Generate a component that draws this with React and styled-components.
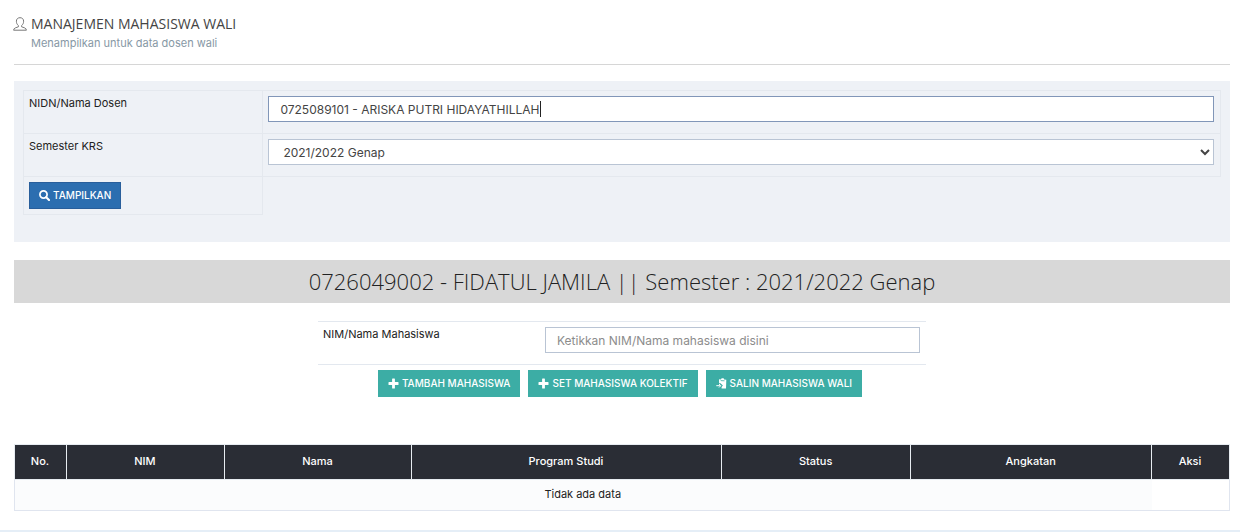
import React, { useState } from "react";
import styled, { createGlobalStyle } from "styled-components";

const GlobalStyle = createGlobalStyle`
  * { box-sizing: border-box; }
  body {
    margin: 0;
    background: #fff;
    color: #222;
    font-family: Inter, "Open Sans", sans-serif;
    font-size: 11px;
    line-height: 16px;
  }
  button, input, select { font-family: inherit; }
`;

const Page = styled.main`
  padding: 14px 10px 0 14px;
`;

const PageHeader = styled.header`
  display: flex;
  gap: 4px;
  padding-bottom: 12px;
  border-bottom: 1px solid #d6d6d6;

  svg { flex: none; margin: 3px 0 0 -1px; }
`;

const Title = styled.h1`
  margin: 0;
  color: #444;
  font-family: "Open Sans", sans-serif;
  font-size: 14px;
  font-weight: 400;
  line-height: 20px;
`;

const Subtitle = styled.p`
  margin: 0;
  color: #8798a5;
  font-size: 11px;
  line-height: 18px;
`;

const FilterPanel = styled.form`
  margin-top: 16px;
  padding: 9px 9px 27px;
  background: #eef1f6;
`;

const FilterTable = styled.table`
  width: 100%;
  table-layout: fixed;
  border-collapse: collapse;
`;

const FilterCell = styled.td`
  width: ${(p) => p.$width};
  height: ${(p) => (p.$last ? 38 : 43)}px;
  padding: 4px 6px 4px 5px;
  border: 1px solid #e4e8ee;
  vertical-align: top;

  input, select, button { margin-top: 1px; }
`;

const Field = styled.div`
  position: relative;
  display: flex;
`;

const TextBox = styled.input`
  display: block;
  width: 100%;
  height: 26px;
  padding: 0 11px;
  border: 1px solid ${(p) => (p.$active ? "#8196b8" : "#b9c4d4")};
  border-radius: 0;
  outline: 0;
  background: #fff;
  color: #444;
  font-size: 12px;

  &::placeholder { color: #8c8c8c; opacity: 1; }
`;

const Caret = styled.span`
  position: absolute;
  top: 6px;
  left: 12px;
  height: 16px;
  padding-right: 1px;
  border-right: 1px solid #222;
  color: transparent;
  font-size: 12px;
  white-space: pre;
  pointer-events: none;
  user-select: none;

  &::before { content: "${(p) => p.$text}"; }
`;

const Select = styled.select`
  display: block;
  width: 100%;
  height: 26px;
  padding: 0 24px 0 14px;
  border: 1px solid #b9c4d4;
  border-radius: 0;
  appearance: none;
  background: #fff;
  color: #444;
  font-size: 12px;
`;

const Chevron = styled.svg`
  position: absolute;
  top: 10px;
  right: 4px;
  pointer-events: none;
`;

const Button = styled.button`
  display: inline-flex;
  align-items: center;
  gap: 3px;
  height: 27px;
  padding: 0 9px 1px;
  border: 1px solid ${(p) => (p.$primary ? "#285e9b" : "#3cada5")};
  background: ${(p) => (p.$primary ? "#2c6eb0" : "#3cada5")};
  color: #fff;
  font-size: 10px;
  font-weight: 500;
  white-space: nowrap;
  cursor: pointer;
`;

const Banner = styled.h2`
  margin: 18px 0;
  padding: 6px 0 7px;
  background: #d8d8d8;
  color: #222;
  font-family: "Open Sans", sans-serif;
  font-size: 22px;
  font-weight: 300;
  line-height: 30px;
  text-align: center;
`;

const StudentRow = styled.div`
  display: grid;
  grid-template-columns: 222px 1fr;
  width: 50%;
  height: 44px;
  margin: 0 auto;
  padding: 4px 6px 0 5px;
  border: solid #e3e8ef;
  border-width: 1px 0;

  input { margin-top: 1px; }
`;

const Actions = styled.div`
  display: flex;
  justify-content: center;
  gap: 8px;
  margin: 5px 0 47px;
  padding-right: 4px;
`;

const DataTable = styled.table`
  width: 100%;
  table-layout: fixed;
  border: 1px solid #e0e5ef;
  border-collapse: collapse;
  text-align: center;
`;

const HeadCell = styled.th`
  width: ${(p) => p.$width};
  height: 35px;
  padding: 0 1px 2px 0;
  border: 1px solid #e7ecf1;
  background: #2a2d35;
  color: #fff;
  font-size: 11px;
  font-weight: 500;
`;

const BodyCell = styled.td`
  height: 31px;
  padding: 0 1px 2px 0;
  background: ${(p) => (p.$plain ? "#fff" : "#fbfcfd")};
  font-size: 11px;
`;

const FooterStrip = styled.footer`
  height: 2px;
  margin-top: 19px;
  background: #e5eef7;
`;

const UserIcon = () => (
  <svg width="14" height="14" viewBox="0 0 14 14" fill="none" stroke="#777" aria-hidden="true">
    <path d="M5.4 8.5C4 7.5 3.4 6 3.4 4.2 3.4 2 4.8.7 7 .7s3.6 1.3 3.6 3.5c0 1.8-.6 3.3-2 4.3v1.3c1.6.7 4.8 1 4.8 3.4H.6c0-2.4 3.2-2.7 4.8-3.4z" />
  </svg>
);

const SearchIcon = () => (
  <svg width="11" height="11" viewBox="0 0 11 11" fill="none" stroke="#fff" aria-hidden="true">
    <circle cx="4.5" cy="4.5" r="3.6" strokeWidth="1.7" />
    <path d="M7.2 7.2l2.800 2.800" strokeWidth="2.1" strokeLinecap="round" />
  </svg>
);

const PlusIcon = () => (
  <svg width="11" height="11" viewBox="0 0 11 11" fill="#fff" aria-hidden="true">
    <path d="M4.6.5h1.800q.5 0 .5.5v3.100H10q.5 0 .5.500v1.800q0 .5-.5.500H6.900V10q0 .5-.5.500H4.600q-.5 0-.5-.5V6.900H1q-.5 0-.5-.5V4.600q0-.5.5-.5h3.100V1q0-.5.5-.5z" />
  </svg>
);

const PasteIcon = () => (
  <svg width="11" height="11" viewBox="0 0 11 11" aria-hidden="true">
    <path fill="#fff" d="M3 1.200l2 .3.600-1.200h2l.6 1.300 2.100.2-.3 8.700H5.600V8.900L6.900 7.500 4.500 5.300 3.100 5.200z" />
    <path fill="none" stroke="#fff" d="M.3 7.700h4M3 6l1.800 1.700L3 9.500" />
    <path fill="none" stroke="#3cada5" strokeWidth=".8" d="M4.700 2.600l3.800.2" />
  </svg>
);

const columns = [
  ["No.", "52px"],
  ["NIM", "13%"],
  ["Nama", "15.4%"],
  ["Program Studi", "25.5%"],
  ["Status", "15.6%"],
  ["Angkatan", "auto"],
  ["Aksi", "78px"],
];

export default function App() {
  const [lecturer, setLecturer] = useState("0725089101 - ARISKA PUTRI HIDAYATHILLAH");

  return (
    <>
      <GlobalStyle />
      <Page>
        <PageHeader>
          <UserIcon />
          <div>
            <Title>MANAJEMEN MAHASISWA WALI</Title>
            <Subtitle>Menampilkan untuk data dosen wali</Subtitle>
          </div>
        </PageHeader>

        <FilterPanel onSubmit={(e) => e.preventDefault()}>
          <FilterTable>
            <tbody>
              <tr>
                <FilterCell $width="20%"><label htmlFor="lecturer">NIDN/Nama Dosen</label></FilterCell>
                <FilterCell $width="80%">
                  <Field>
                    <TextBox id="lecturer" $active value={lecturer} onChange={(e) => setLecturer(e.target.value)} />
                    <Caret $text={lecturer} aria-hidden="true" />
                  </Field>
                </FilterCell>
              </tr>
              <tr>
                <FilterCell><label htmlFor="semester">Semester KRS</label></FilterCell>
                <FilterCell>
                  <Field>
                    <Select id="semester"><option>2021/2022 Genap</option></Select>
                    <Chevron width="10" height="8" viewBox="0 0 10 8" fill="none" stroke="#444" strokeWidth="2" aria-hidden="true">
                      <path d="M1 2l4 4 4-4" />
                    </Chevron>
                  </Field>
                </FilterCell>
              </tr>
              <tr>
                <FilterCell $last><Button $primary type="submit"><SearchIcon />TAMPILKAN</Button></FilterCell>
              </tr>
            </tbody>
          </FilterTable>
        </FilterPanel>

        <Banner>0726049002 - FIDATUL JAMILA || Semester : 2021/2022 Genap</Banner>

        <StudentRow>
          <label htmlFor="student">NIM/Nama Mahasiswa</label>
          <TextBox id="student" placeholder="Ketikkan NIM/Nama mahasiswa disini" />
        </StudentRow>
        <Actions>
          <Button type="button"><PlusIcon />TAMBAH MAHASISWA</Button>
          <Button type="button"><PlusIcon />SET MAHASISWA KOLEKTIF</Button>
          <Button type="button"><PasteIcon />SALIN MAHASISWA WALI</Button>
        </Actions>

        <DataTable>
          <thead>
            <tr>
              {columns.map(([name, width]) => (
                <HeadCell key={name} scope="col" $width={width}>{name}</HeadCell>
              ))}
            </tr>
          </thead>
          <tbody>
            <tr>
              <BodyCell colSpan={6}>Tidak ada data</BodyCell>
              <BodyCell $plain />
            </tr>
          </tbody>
        </DataTable>
      </Page>
      <FooterStrip />
    </>
  );
}
